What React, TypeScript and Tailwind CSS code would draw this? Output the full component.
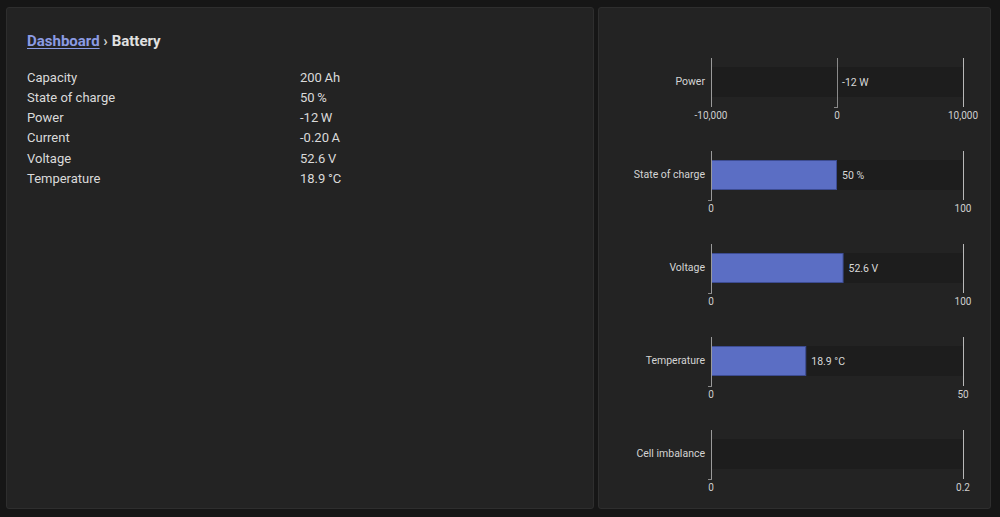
import React from "react";

const font = { fontFamily: "Roboto, 'Noto Sans', sans-serif" };

const rows = [
  ["Capacity", "200\u2009Ah"],
  ["State of charge", "50\u2009%"],
  ["Power", "-12\u2009W"],
  ["Current", "-0.20\u2009A"],
  ["Voltage", "52.6\u2009V"],
  ["Temperature", "18.9\u2009°C"],
];

type Chart = {
  label: string;
  min: number;
  max: number;
  value: number;
  text: string;
  ticks: string[];
};

const charts: Chart[] = [
  { label: "Power", min: -10000, max: 10000, value: -12, text: "-12 W", ticks: ["-10,000", "0", "10,000"] },
  { label: "State of charge", min: 0, max: 100, value: 50, text: "50 %", ticks: ["0", "100"] },
  { label: "Voltage", min: 0, max: 100, value: 52.6, text: "52.6 V", ticks: ["0", "100"] },
  { label: "Temperature", min: 0, max: 50, value: 18.9, text: "18.9 °C", ticks: ["0", "50"] },
  { label: "Cell imbalance", min: 0, max: 0.2, value: 0, text: "", ticks: ["0", "0.2"] },
];

const X0 = 6;
const X1 = 258;

function BarChart({ c }: { c: Chart }) {
  const scale = (v: number) => X0 + ((v - c.min) / (c.max - c.min)) * (X1 - X0);
  const zero = scale(Math.max(c.min, 0));
  const end = scale(c.value);
  const tickPos = c.ticks.length === 3 ? [X0, zero, X1] : [X0, X1];
  return (
    <div className="flex items-start">
      <div className="w-[106px] h-[60px] flex items-center justify-end text-[10.5px] text-[#d4d4d4]">
        {c.label}
      </div>
      <svg width="285" height="70" className="block overflow-visible">
        <rect x={X0} y={15} width={X1 - X0} height={30} fill="#1d1d1d" />
        {c.value > 0 && (
          <rect x={zero + 0.5} y={15.5} width={end - zero - 1} height={29} fill="#5b6ec4" stroke="#3d4c92" />
        )}
        {c.text && (
          <text x={Math.max(end, zero) + 5} y={34} fill="#d8d8d8" fontSize="10.5" style={font}>
            {c.text}
          </text>
        )}
        <line x1={X0 + 0.5} y1={6} x2={X0 + 0.5} y2={55} stroke="#9a9a9a" />
        <line x1={X1 + 0.5} y1={6} x2={X1 + 0.5} y2={55} stroke="#b8b8b8" />
        {c.ticks.length === 3 && <line x1={zero + 0.5} y1={6} x2={zero + 0.5} y2={55} stroke="#8a8a8a" />}
        <line x1={zero - 3} y1={55.5} x2={zero + 1} y2={55.5} stroke="#8a8a8a" />
        {c.ticks.map((t, i) => (
          <text key={t} x={tickPos[i]} y={67} textAnchor="middle" fill="#cfcfcf" fontSize="10" style={font}>
            {t}
          </text>
        ))}
      </svg>
    </div>
  );
}

export default function App() {
  return (
    <div className="w-[1000px] h-[517px] bg-[#161616] flex gap-[4px] pl-[6px] pt-[7px] pb-[8px]" style={font}>
      <div className="w-[588px] h-[502px] bg-[#232323] border border-[#2e2e2e] rounded-[3px] px-[20px] pt-[22px]">
        <h1 className="text-[15px] font-bold text-[#e0e0e0] mb-[15px]">
          <a className="text-[#8b9be3] underline underline-offset-2">Dashboard</a>
          <span className="text-[#cfcfcf]"> › </span>
          Battery
        </h1>
        <div className="flex flex-col text-[13px] text-[#dadada] leading-[20.3px]">
          {rows.map(([k, v]) => (
            <div key={k} className="flex">
              <span className="w-[273px]">{k}</span>
              <span>{v}</span>
            </div>
          ))}
        </div>
      </div>
      <div className="w-[393px] h-[502px] bg-[#232323] border border-[#2e2e2e] rounded-[3px] pt-[44px] flex flex-col gap-[23px]">
        {charts.map((c) => (
          <BarChart key={c.label} c={c} />
        ))}
      </div>
    </div>
  );
}
